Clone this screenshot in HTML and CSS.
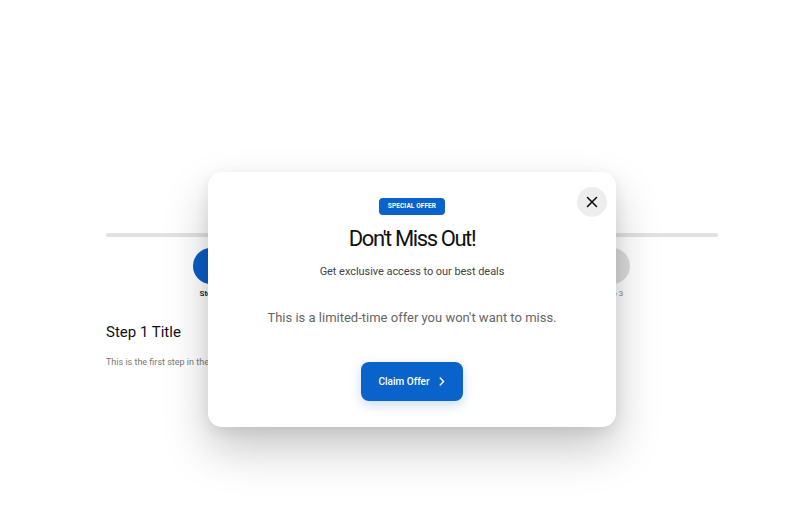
FILE: index.html
```html
<!DOCTYPE html>
<html lang="en">
<head>
<meta charset="utf-8">
<title>Special Offer</title>
<link rel="stylesheet" href="styles.css">
</head>
<body>
<div class="page">
  <div class="stepper">
    <div class="track"></div>
    <div class="steps">
      <div class="step active">
        <div class="dot">1</div>
        <div class="label">Step 1</div>
      </div>
      <div class="step">
        <div class="dot">2</div>
        <div class="label">Step 2</div>
      </div>
      <div class="step">
        <div class="dot">3</div>
        <div class="label">Step 3</div>
      </div>
    </div>
  </div>
  <div class="content">
    <h2 class="step-title">Step 1 Title</h2>
    <p class="step-desc">This is the first step in the process.</p>
  </div>
</div>

<div class="modal" role="dialog" aria-modal="true">
  <button class="close" aria-label="Close">
    <svg width="12" height="12" viewBox="0 0 12 12"><path d="M1.5 1.5L10.5 10.5M10.5 1.5L1.5 10.5" stroke="#111" stroke-width="1.6" stroke-linecap="round"/></svg>
  </button>
  <span class="badge">SPECIAL OFFER</span>
  <h1 class="title">Don't Miss Out!</h1>
  <p class="subtitle">Get exclusive access to our best deals</p>
  <p class="body">This is a limited-time offer you won't want to miss.</p>
  <button class="cta">Claim Offer
    <svg width="6" height="9" viewBox="0 0 6 9"><path d="M1.2 1L4.6 4.5L1.2 8" fill="none" stroke="#fff" stroke-width="1.4" stroke-linecap="round" stroke-linejoin="round"/></svg>
  </button>
</div>
</body>
</html>
```
FILE: styles.css
```css
* { box-sizing: border-box; }
html, body { margin: 0; padding: 0; background: #fff; }
body {
  width: 800px;
  height: 505px;
  overflow: hidden;
  font-family: Roboto, "Noto Sans", sans-serif;
  color: #111;
  position: relative;
}
.page {
  width: 612px;
  margin-left: 106px;
  padding-top: 233px;
}
.stepper { position: relative; }
.track {
  height: 4px;
  background: #e2e2e2;
  border-radius: 2px;
}
.steps {
  display: flex;
  justify-content: space-between;
  padding: 0 88px 0 87px;
  margin-top: 11px;
}
.step {
  width: 36px;
  display: flex;
  flex-direction: column;
  align-items: center;
}
.dot {
  width: 36px;
  height: 36px;
  border-radius: 50%;
  background: #dcdcdc;
  color: #8a8a8a;
  font-size: 12px;
  font-weight: 700;
  display: flex;
  align-items: center;
  justify-content: center;
}
.label {
  margin-top: 5px;
  font-size: 8px;
  color: #888;
  white-space: nowrap;
}
.step.active .dot { background: #0a5fc4; color: #fff; }
.step.active .label { color: #111; font-weight: 600; }
.content { padding-top: 24px; }
.step-title {
  margin: 0;
  font-size: 15px;
  font-weight: 400;
  line-height: 20px;
  color: #111;
}
.step-desc {
  margin: 14px 0 0;
  font-size: 9px;
  line-height: 12px;
  color: #777;
}

.modal {
  position: absolute;
  left: 208px;
  top: 172px;
  width: 408px;
  height: 255px;
  background: #fff;
  border-radius: 14px;
  box-shadow: 0 22px 45px rgba(0,0,0,0.22), 0 4px 14px rgba(0,0,0,0.08);
  display: flex;
  flex-direction: column;
  align-items: center;
  padding-top: 26px;
  text-align: center;
}
.close {
  position: absolute;
  right: 9px;
  top: 15px;
  width: 30px;
  height: 30px;
  border-radius: 50%;
  border: 0;
  background: #ededed;
  display: flex;
  align-items: center;
  justify-content: center;
  padding: 0;
  cursor: pointer;
}
.badge {
  display: block;
  height: 17px;
  line-height: 17px;
  padding: 0 9px;
  background: #0a63cb;
  color: #fff;
  font-size: 6.5px;
  font-weight: 700;
  border-radius: 4px;
  letter-spacing: 0.1px;
}
.title {
  margin: 10px 0 0;
  font-size: 22px;
  line-height: 28px;
  font-weight: 400;
  letter-spacing: -1.4px;
  color: #111;
}
.subtitle {
  margin: 11px 0 0;
  font-size: 11px;
  line-height: 16px;
  color: #444;
  letter-spacing: -0.05px;
}
.body {
  margin: 28px 0 0;
  font-size: 13px;
  line-height: 20px;
  color: #666;
}
.cta {
  margin-top: 34px;
  width: 102px;
  height: 39px;
  border: 0;
  border-radius: 8px;
  background: #0a63cb;
  color: #fff;
  font-family: Roboto, "Noto Sans", sans-serif;
  font-size: 10px;
  font-weight: 500;
  display: flex;
  align-items: center;
  justify-content: center;
  gap: 10px;
  box-shadow: 0 4px 12px rgba(10,99,203,0.22);
  padding: 0;
}
```
